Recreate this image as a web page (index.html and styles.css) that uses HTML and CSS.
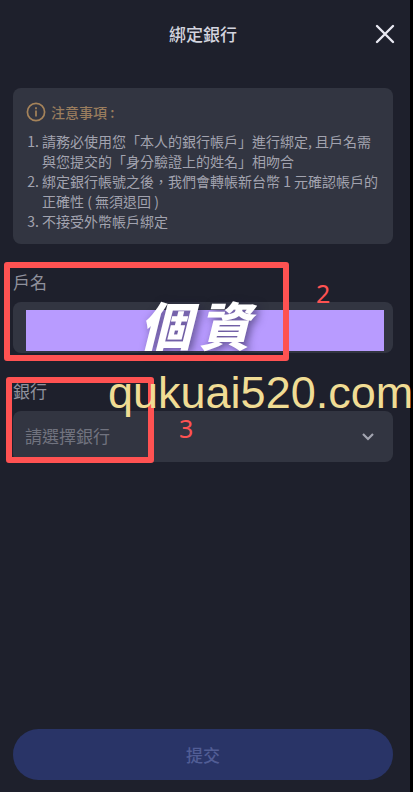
FILE: index.html
```
<!DOCTYPE html>
<html lang="zh-Hant">
<head>
    <meta charset="UTF-8">
    <meta name="viewport" content="width=device-width, initial-scale=1.0">
    <title>綁定銀行</title>
    <link rel="stylesheet" href="styles.css">
</head>
<body>
    <form class="screen">
        <header class="header">
            <h1>綁定銀行</h1>
            <button type="button" class="close" aria-label="關閉">
                <svg width="20" height="20" viewBox="0 0 20 20" fill="none" stroke="#e9e9f2" stroke-width="2.4" stroke-linecap="round">
                    <path d="M2 2l16 16M18 2L2 18"/>
                </svg>
            </button>
        </header>

        <section class="notice">
            <h2>
                <svg width="20" height="20" viewBox="0 0 20 20" fill="none" stroke="#a5835a" stroke-width="1.7">
                    <circle cx="10" cy="10" r="8.6"/>
                    <path d="M10 8.6v5.8M10 5.2v2"/>
                </svg>
                <span>注意事項 :</span>
            </h2>
            <ol>
                <li>請務必使用您「本人的銀行帳戶」進行綁定, 且戶名需與您提交的「身分驗證上的姓名」相吻合</li>
                <li>綁定銀行帳號之後，我們會轉帳新台幣 1 元確認帳戶的正確性 ( 無須退回 )</li>
                <li>不接受外幣帳戶綁定</li>
            </ol>
        </section>

        <div class="field">
            <label for="name">戶名</label>
            <div class="control">
                <input type="text" id="name" readonly>
                <div class="mask"><span>個</span><span>資</span></div>
            </div>
            <div class="mark mark-name"></div>
            <span class="step step-name">2</span>
        </div>

        <div class="field">
            <label for="bank">銀行</label>
            <div class="control">
                <select id="bank">
                    <option value="">請選擇銀行</option>
                </select>
                <svg class="arrow" width="14" height="10" viewBox="0 0 14 10" fill="none" stroke="#a3a5b0" stroke-width="2.2">
                    <path d="M2 2l5 5 5-5"/>
                </svg>
            </div>
            <div class="mark mark-bank"></div>
            <span class="step step-bank">3</span>
            <span class="watermark">qukuai520.com</span>
        </div>

        <button type="submit" class="submit" disabled>提交</button>
    </form>
</body>
</html>
```
FILE: styles.css
```
* {
    box-sizing: border-box;
}

body {
    margin: 0;
    background-color: #000000;
    font-family: "Liberation Sans", "Noto Sans CJK TC", sans-serif;
    color: #a2a3af;
    overflow-x: hidden;
}

.screen {
    display: flex;
    flex-direction: column;
    min-height: 100vh;
    margin-right: 3px;
    padding: 0 17px 12px 13px;
    background-color: #1e202c;
}

h1, h2, ol {
    margin: 0;
    padding: 0;
}

.header {
    display: grid;
    grid-template-columns: 1fr auto 1fr;
    align-items: center;
    height: 68px;
}

h1 {
    grid-column: 2;
    padding-bottom: 2px;
    font-size: 17px;
    font-weight: 500;
    color: #d3d4df;
}

.close {
    justify-self: end;
    display: flex;
    margin-right: -2px;
    padding: 0;
    border: none;
    background: none;
    cursor: pointer;
}

.notice {
    margin-top: 20px;
    padding: 12px 13px;
    border-radius: 8px;
    background-color: #323541;
    font-family: "Noto Sans CJK TC", sans-serif;
    font-size: 14px;
    line-height: 20px;
}

.notice h2 {
    display: flex;
    align-items: center;
    gap: 5px;
    height: 24px;
    font-size: 14px;
    font-weight: 500;
    color: #9a7d5e;
}

.notice ol {
    margin-top: 7px;
    padding: 0 0 1px 16px;
}

.field {
    position: relative;
    margin-top: 26px;
}

.field label {
    display: block;
    margin-bottom: 4px;
    font-size: 17px;
    line-height: 28px;
    color: #8f919c;
}

.control {
    position: relative;
}

.control input,
.control select {
    display: block;
    width: 100%;
    height: 51px;
    padding: 2px 12px 0;
    border: none;
    border-radius: 8px;
    background-color: #323541;
    font-family: inherit;
    font-size: 17px;
    color: #71737f;
    appearance: none;
}

/* covers the account name */
.mask {
    position: absolute;
    inset: 8px 9px 2px 13px;
    display: flex;
    align-items: center;
    justify-content: center;
    gap: 7px;
    padding: 0 20px 6px 0;
    background-color: #b89bff;
    font-size: 52px;
    font-style: italic;
    font-weight: 900;
    line-height: 40px;
    color: #ffffff;
    text-shadow: 3px 2px 8px rgba(30, 25, 60, 0.6);
}

.arrow {
    position: absolute;
    top: 21px;
    right: 18px;
    pointer-events: none;
}

.mark {
    position: absolute;
    border: 6px solid #ff5252;
    border-radius: 3px;
    pointer-events: none;
}

.mark-name {
    top: -8px;
    left: -9px;
    width: 285px;
    height: 99px;
}

.mark-bank {
    top: -2px;
    left: -7px;
    width: 148px;
    height: 86px;
}

.step {
    position: absolute;
    font-family: "Noto Sans", sans-serif;
    font-size: 25px;
    line-height: 28px;
    color: #ff5252;
}

.step-name {
    top: 9px;
    left: 303px;
}

.step-bank {
    top: 35px;
    left: 166px;
}

.watermark {
    position: absolute;
    top: -12px;
    left: 95px;
    font-size: 45px;
    line-height: 52px;
    color: #f0dc94;
    pointer-events: none;
}

.submit {
    height: 51px;
    margin-top: auto;
    border: none;
    border-radius: 26px;
    background-color: #293467;
    font-family: inherit;
    font-size: 17px;
    font-weight: 500;
    color: #515d95;
}
```
